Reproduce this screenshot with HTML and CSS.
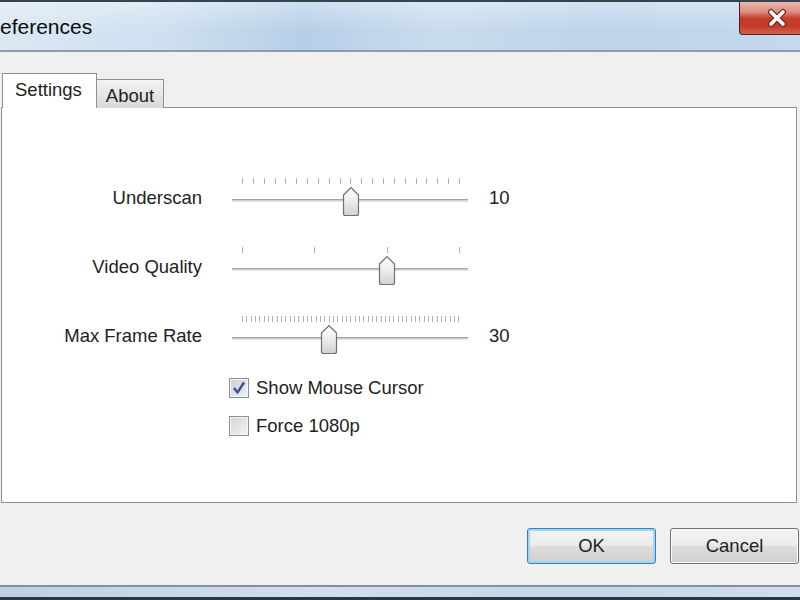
FILE: index.html
```html
<!DOCTYPE html>
<html lang="en">
<head>
<meta charset="UTF-8">
<meta name="viewport" content="width=device-width, initial-scale=1.0">
<title>Preferences</title>
<link rel="stylesheet" href="styles.css">
</head>
<body>
<div class="window">
    <div class="titlebar">
        <span class="title">Preferences</span>
        <div class="close-btn">
            <svg width="22" height="20" viewBox="0 0 22 20">
                <path d="M5 4 L17 16 M17 4 L5 16" stroke="#6b2a22" stroke-width="6" stroke-linecap="round"/>
                <path d="M5 4 L17 16 M17 4 L5 16" stroke="#ffffff" stroke-width="3.6" stroke-linecap="round"/>
            </svg>
        </div>
    </div>

    <div class="client">
        <div class="tabs">
            <div class="tab active">Settings</div>
            <div class="tab">About</div>
        </div>

        <div class="panel">
            <div class="sliders">
                <div class="slider-label">Underscan</div>
                <div class="slider" data-min="0" data-max="20" data-value="10">
                    <div class="ticks"></div>
                    <div class="track"></div>
                </div>
                <div class="slider-value">10</div>

                <div class="slider-label">Video Quality</div>
                <div class="slider" data-min="0" data-max="3" data-value="2">
                    <div class="ticks"></div>
                    <div class="track"></div>
                </div>
                <div class="slider-value"></div>

                <div class="slider-label">Max Frame Rate</div>
                <div class="slider" data-min="10" data-max="60" data-value="30">
                    <div class="ticks"></div>
                    <div class="track"></div>
                </div>
                <div class="slider-value">30</div>
            </div>

            <div class="checks">
                <label class="check">
                    <span class="box checked">
                        <svg width="18" height="18" viewBox="0 0 18 18">
                            <path d="M4 9 L7.5 13.5 L14 3.5" fill="none" stroke="#3f5286" stroke-width="2.4" stroke-linejoin="round"/>
                        </svg>
                    </span>
                    Show Mouse Cursor
                </label>
                <label class="check">
                    <span class="box"></span>
                    Force 1080p
                </label>
            </div>
        </div>

        <div class="buttons">
            <button class="btn default">OK</button>
            <button class="btn">Cancel</button>
        </div>
    </div>

    <div class="frame-bottom"></div>
</div>

<script>
var thumbSvg = '<svg width="18" height="31" viewBox="0 0 18 31">' +
    '<defs><linearGradient id="tg" x1="0" y1="0" x2="0" y2="1">' +
    '<stop offset="0" stop-color="#ffffff"/><stop offset="0.5" stop-color="#ececec"/>' +
    '<stop offset="1" stop-color="#d2d2d2"/></linearGradient></defs>' +
    '<path d="M1.5 9 L9 1.5 L16.5 9 V27.5 Q16.5 29.5 14.5 29.5 H3.5 Q1.5 29.5 1.5 27.5 Z" fill="url(#tg)" stroke="#707070" stroke-width="1.2"/>' +
    '</svg>';

var sliders = document.getElementsByClassName("slider");
for (var i = 0; i < sliders.length; i++) {
    var s = sliders[i];
    var min = parseInt(s.getAttribute("data-min"));
    var max = parseInt(s.getAttribute("data-max"));
    var value = parseInt(s.getAttribute("data-value"));
    var ticksHtml = "";
    for (var t = min; t <= max; t++) {
        ticksHtml += "<span></span>";
    }
    s.getElementsByClassName("ticks")[0].innerHTML = ticksHtml;

    var thumb = document.createElement("div");
    thumb.className = "thumb";
    thumb.innerHTML = thumbSvg;
    var frac = (value - min) / (max - min);
    thumb.style.left = Math.round(10 + frac * 217 - 8.5) + "px";
    s.appendChild(thumb);
}
</script>
</body>
</html>
```

FILE: styles.css
```css
body {
    margin: 0;
    font-family: "Liberation Sans", Arial, sans-serif;
    font-size: 18.5px;
    color: #222222;
    background: #f0f0f0;
}

.window {
    width: 800px;
    height: 600px;
    display: flex;
    flex-direction: column;
    overflow: hidden;
}

/* title bar */
.titlebar {
    height: 48px;
    flex-shrink: 0;
    display: flex;
    align-items: flex-start;
    border-top: 2px solid #34444f;
    border-bottom: 2px solid #8d9cab;
    background:
        linear-gradient(to bottom, rgba(255, 255, 255, 0.35), rgba(255, 255, 255, 0) 60%),
        linear-gradient(to right, #dbe7f3 0%, #cfe0f0 20%, #b6cfe8 38%, #c9dcef 55%, #bcd3ea 75%, #c4d9ee 100%);
}
.title {
    margin-left: -21px;
    margin-top: 13px;
    font-size: 21px;
    color: #0c0c0c;
}
.close-btn {
    margin-left: auto;
    width: 46px;
    height: 32px;
    border: 1px solid #4e1f1a;
    border-top: none;
    border-right: none;
    border-bottom-left-radius: 4px;
    display: flex;
    align-items: center;
    justify-content: center;
    padding-left: 14px;
    box-sizing: content-box;
    background: linear-gradient(to bottom, #ebb8ad 0%, #de8e80 30%, #c63c2b 52%, #c3392a 75%, #d4634c 100%);
}

/* client area */
.client {
    flex: 1;
    display: flex;
    flex-direction: column;
    padding: 21px 3px 21px 1px;
}

.tabs {
    display: flex;
    align-items: flex-end;
    margin-bottom: -1px;
    position: relative;
    z-index: 1;
}
.tab {
    height: 28px;
    padding: 0 9px 0 9px;
    border: 1px solid #8d9096;
    border-bottom: none;
    background: linear-gradient(to bottom, #f4f4f4, #e6e6e6 50%, #d9d9d9);
    line-height: 31px;
    margin-left: -1px;
}
.tab.active {
    height: 34px;
    margin-left: 1px;
    padding: 0 14px 0 12px;
    background: #ffffff;
    line-height: 32px;
    z-index: 2;
    position: relative;
}

.panel {
    flex: 1;
    background: #ffffff;
    border: 1px solid #8d9096;
    padding-top: 68px;
}

.sliders {
    display: grid;
    grid-template-columns: 200px 236px auto;
    column-gap: 30px;
    row-gap: 28px;
    align-items: center;
}
.slider-label {
    text-align: right;
    padding-top: 3px;
}
.slider-value {
    margin-left: -9px;
    padding-top: 2px;
}

.slider {
    position: relative;
    height: 41px;
}
.ticks {
    display: flex;
    justify-content: space-between;
    width: 218px;
    height: 6px;
    margin: 2px 0 0 10px;
}
.ticks span {
    width: 1px;
    height: 6px;
    background: #b0b0b0;
}
.track {
    height: 1px;
    margin-top: 15px;
    border-top: 1px solid #a4a4a4;
    border-bottom: 1px solid #e2e2e2;
    background: #cfcfcf;
}
.thumb {
    position: absolute;
    top: 10px;
    width: 18px;
    height: 31px;
}

.checks {
    padding: 22px 0 0 227px;
    display: flex;
    flex-direction: column;
    gap: 16px;
}
.check {
    display: flex;
    align-items: center;
    gap: 7px;
    height: 22px;
}
.box {
    width: 18px;
    height: 18px;
    border: 1px solid #8f8f8f;
    background: linear-gradient(135deg, #d4d4d4, #f4f4f4);
    box-shadow: inset 0 0 0 1px #f6f6f6;
    display: flex;
    align-items: center;
    justify-content: center;
}
.box.checked {
    background: linear-gradient(135deg, #c9d0de, #eef1f7);
}

.buttons {
    display: flex;
    justify-content: flex-end;
    gap: 14px;
    margin-top: 25px;
    margin-right: -2px;
}
.btn {
    width: 129px;
    height: 36px;
    font-family: "Liberation Sans", Arial, sans-serif;
    font-size: 18.5px;
    color: #222222;
    border: 1px solid #707070;
    border-radius: 3px;
    background: linear-gradient(to bottom, #f3f3f3 0%, #ebebeb 48%, #dddddd 52%, #cfcfcf 100%);
    box-shadow: inset 0 0 0 1px #fbfbfb;
}
.btn.default {
    border-color: #3c7fb1;
    box-shadow: inset 0 0 0 2px #9fd6f3;
}

.frame-bottom {
    height: 10px;
    flex-shrink: 0;
    border-top: 2px solid #8490a0;
    border-bottom: 3px solid #2a3744;
    background: linear-gradient(to right, #bed0e4, #d0dfee 40%, #c4d6ea 70%, #cfdeee);
}
```
